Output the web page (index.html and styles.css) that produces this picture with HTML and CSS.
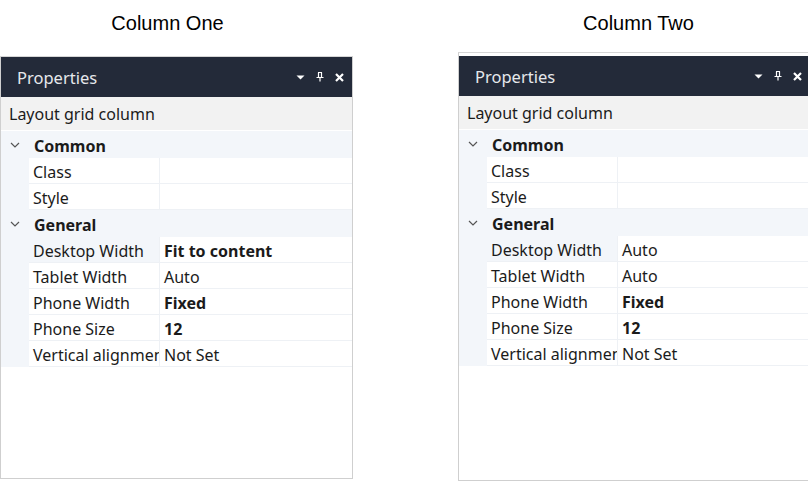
FILE: index.html
```html
<!DOCTYPE html>
<html>
<head>
<meta charset="utf-8">
<link rel="stylesheet" href="styles.css">
</head>
<body>
<div class="page">
  <section class="col col-one">
    <h2 class="col-title">Column One</h2>
    <div class="panel">
      <div class="panel-head">
        <span class="panel-name">Properties</span>
        <span class="head-icons">
          <svg class="ic" width="9" height="8" viewBox="0 0 9 8"><path d="M0.5 2.5h8L4.5 6.5z" fill="#fff"/></svg>
          <svg class="ic" width="8" height="10" viewBox="0 0 8 10"><path d="M2 0.5h4M2.5 0.5v5h3v-5M0.5 5.5h7M4 5.5v4" stroke="#fff" stroke-width="1.2" fill="none"/></svg>
          <svg class="ic" width="9" height="9" viewBox="0 0 9 9"><path d="M1 1l7 7M8 1l-7 7" stroke="#fff" stroke-width="2.2"/></svg>
        </span>
      </div>
      <div class="panel-sub">Layout grid column</div>
      <div class="grid">
        <div class="group"><svg class="chev" width="10" height="6" viewBox="0 0 10 6"><path d="M1 1l4 4 4-4" stroke="#555" stroke-width="1.2" fill="none"/></svg><span>Common</span></div>
        <div class="row"><span class="gut"></span><span class="name">Class</span><span class="val"></span></div>
        <div class="row"><span class="gut"></span><span class="name">Style</span><span class="val"></span></div>
        <div class="group"><svg class="chev" width="10" height="6" viewBox="0 0 10 6"><path d="M1 1l4 4 4-4" stroke="#555" stroke-width="1.2" fill="none"/></svg><span>General</span></div>
        <div class="row"><span class="gut"></span><span class="name sel">Desktop Width</span><span class="val bold">Fit to content</span></div>
        <div class="row"><span class="gut"></span><span class="name">Tablet Width</span><span class="val">Auto</span></div>
        <div class="row"><span class="gut"></span><span class="name">Phone Width</span><span class="val bold">Fixed</span></div>
        <div class="row"><span class="gut"></span><span class="name">Phone Size</span><span class="val bold">12</span></div>
        <div class="row"><span class="gut"></span><span class="name">Vertical alignment</span><span class="val">Not Set</span></div>
      </div>
    </div>
  </section>
  <section class="col col-two">
    <h2 class="col-title">Column Two</h2>
    <div class="panel">
      <div class="panel-head">
        <span class="panel-name">Properties</span>
        <span class="head-icons">
          <svg class="ic" width="9" height="8" viewBox="0 0 9 8"><path d="M0.5 2.5h8L4.5 6.5z" fill="#fff"/></svg>
          <svg class="ic" width="8" height="10" viewBox="0 0 8 10"><path d="M2 0.5h4M2.5 0.5v5h3v-5M0.5 5.5h7M4 5.5v4" stroke="#fff" stroke-width="1.2" fill="none"/></svg>
          <svg class="ic" width="9" height="9" viewBox="0 0 9 9"><path d="M1 1l7 7M8 1l-7 7" stroke="#fff" stroke-width="2.2"/></svg>
        </span>
      </div>
      <div class="panel-sub">Layout grid column</div>
      <div class="grid">
        <div class="group"><svg class="chev" width="10" height="6" viewBox="0 0 10 6"><path d="M1 1l4 4 4-4" stroke="#555" stroke-width="1.2" fill="none"/></svg><span>Common</span></div>
        <div class="row"><span class="gut"></span><span class="name">Class</span><span class="val"></span></div>
        <div class="row"><span class="gut"></span><span class="name">Style</span><span class="val"></span></div>
        <div class="group"><svg class="chev" width="10" height="6" viewBox="0 0 10 6"><path d="M1 1l4 4 4-4" stroke="#555" stroke-width="1.2" fill="none"/></svg><span>General</span></div>
        <div class="row"><span class="gut"></span><span class="name sel">Desktop Width</span><span class="val">Auto</span></div>
        <div class="row"><span class="gut"></span><span class="name">Tablet Width</span><span class="val">Auto</span></div>
        <div class="row"><span class="gut"></span><span class="name">Phone Width</span><span class="val bold">Fixed</span></div>
        <div class="row"><span class="gut"></span><span class="name">Phone Size</span><span class="val bold">12</span></div>
        <div class="row"><span class="gut"></span><span class="name">Vertical alignment</span><span class="val">Not Set</span></div>
      </div>
    </div>
  </section>
</div>
</body>
</html>
```

FILE: styles.css
```css
html, body {
  margin: 0;
  padding: 0;
  background: #fff;
  overflow: hidden;
  width: 808px;
  height: 481px;
}
.page {
  display: grid;
  grid-template-columns: 353px 353px;
  column-gap: 105px;
  width: 811px;
}
.col {
  display: flex;
  flex-direction: column;
}
.col-title {
  margin: 0;
  font-family: "Liberation Sans", Arial, sans-serif;
  font-weight: normal;
  font-size: 20px;
  color: #000;
  text-align: center;
  height: 56px;
  line-height: 46px;
}
.col-one .col-title { padding-right: 18px; }
.col-two .col-title { padding-left: 8px; height: 52px; }
.panel {
  border: 1px solid #cfcfcf;
  border-top-color: #d6d6d6;
  font-family: "Noto Sans", "Open Sans", sans-serif;
  color: #1b1b1b;
  background: #fff;
}
.col-one .panel { height: 421px; }
.col-two .panel { padding-top: 3px; height: 424px; }
.panel-head {
  height: 40px;
  background: #232a39;
  display: flex;
  align-items: center;
  justify-content: space-between;
  padding: 0 8px 0 16px;
}
.panel-name {
  color: #e6e8ec;
  font-size: 16.5px;
}
.head-icons {
  display: flex;
  align-items: center;
  gap: 11px;
}
.ic { display: block; }
.panel-sub {
  height: 33px;
  line-height: 34px;
  background: #f2f2f2;
  padding-left: 8px;
  font-size: 16px;
  border-bottom: 1px solid #fff;
}
.grid {
  font-size: 16px;
}
.group {
  height: 27px;
  background: #f3f6fa;
  display: flex;
  align-items: center;
  font-weight: bold;
}
.group span { padding-top: 2px; }
.chev {
  margin: 0 14px 0 9px;
}
.row {
  height: 26px;
  display: grid;
  grid-template-columns: 28px 131px 1fr;
}
.gut {
  background: #f3f6fa;
}
.name {
  padding-left: 4px;
  line-height: 28px;
  height: 25px;
  white-space: nowrap;
  overflow: hidden;
  border-right: 1px solid #eef1f5;
  border-bottom: 1px solid #eef1f5;
}
.name.sel { background: #f3f6fa; }
.val {
  padding-left: 4px;
  line-height: 28px;
  height: 25px;
  white-space: nowrap;
  overflow: hidden;
  border-bottom: 1px solid #eef1f5;
}
.bold { font-weight: bold; }
```
